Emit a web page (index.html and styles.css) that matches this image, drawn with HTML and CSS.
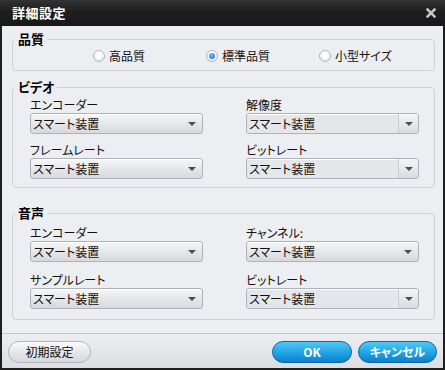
FILE: index.html
```html
<!DOCTYPE html>
<html lang="ja">
<head>
  <meta charset="UTF-8">
  <title>詳細設定</title>
  <link rel="stylesheet" href="styles.css">
</head>
<body>
  <div class="dialog">
    <div class="titlebar">
      <span class="title">詳細設定</span>
      <svg class="close-icon" viewBox="0 0 10 10">
        <line x1="1.5" y1="1.5" x2="8.5" y2="8.5"/>
        <line x1="8.5" y1="1.5" x2="1.5" y2="8.5"/>
      </svg>
    </div>

    <div class="content">
      <!-- Quality -->
      <fieldset class="group group-quality">
        <legend>品質</legend>
        <div class="radio-row">
          <label class="radio"><span class="radio-dot"></span>高品質</label>
          <label class="radio"><span class="radio-dot checked"></span>標準品質</label>
          <label class="radio"><span class="radio-dot"></span>小型サイズ</label>
        </div>
      </fieldset>

      <!-- Video -->
      <fieldset class="group group-video">
        <legend>ビデオ</legend>
        <div class="field-grid">
          <div class="field">
            <div class="field-label">エンコーダー</div>
            <div class="combo"><span>スマート装置</span><span class="combo-arrow"></span></div>
          </div>
          <div class="field">
            <div class="field-label">解像度</div>
            <div class="combo combo-split"><span>スマート装置</span><span class="combo-arrow"></span></div>
          </div>
          <div class="field">
            <div class="field-label">フレームレート</div>
            <div class="combo"><span>スマート装置</span><span class="combo-arrow"></span></div>
          </div>
          <div class="field">
            <div class="field-label">ビットレート</div>
            <div class="combo combo-split"><span>スマート装置</span><span class="combo-arrow"></span></div>
          </div>
        </div>
      </fieldset>

      <!-- Audio -->
      <fieldset class="group group-audio">
        <legend>音声</legend>
        <div class="field-grid">
          <div class="field">
            <div class="field-label">エンコーダー</div>
            <div class="combo"><span>スマート装置</span><span class="combo-arrow"></span></div>
          </div>
          <div class="field">
            <div class="field-label">チャンネル:</div>
            <div class="combo"><span>スマート装置</span><span class="combo-arrow"></span></div>
          </div>
          <div class="field">
            <div class="field-label">サンプルレート</div>
            <div class="combo"><span>スマート装置</span><span class="combo-arrow"></span></div>
          </div>
          <div class="field">
            <div class="field-label">ビットレート</div>
            <div class="combo combo-split"><span>スマート装置</span><span class="combo-arrow"></span></div>
          </div>
        </div>
      </fieldset>
    </div>

    <div class="footer">
      <button class="btn btn-default">初期設定</button>
      <div class="footer-actions">
        <button class="btn btn-primary btn-ok">OK</button>
        <button class="btn btn-primary">キャンセル</button>
      </div>
    </div>
  </div>
</body>
</html>
```

FILE: styles.css
```css
* {
  box-sizing: border-box;
}

body {
  margin: 0;
  font-family: "Noto Sans CJK JP", "Noto Sans", sans-serif;
  font-size: 12px;
  font-feature-settings: "palt" 1;
  color: #111;
  background: #1c1c1c;
}

.dialog {
  width: 445px;
  height: 370px;
  display: flex;
  flex-direction: column;
  background-color: #eceef1;
  border: 2px solid #1e1e1e;
  border-top: none;
}

/* Title bar */
.titlebar {
  height: 26px;
  margin: 0 -2px;
  padding: 0 8px 0 12px;
  display: flex;
  align-items: center;
  justify-content: space-between;
  background: linear-gradient(#333 0%, #202020 40%, #171717 100%);
}

.title {
  color: #fff;
  font-size: 13px;
  font-weight: 700;
  line-height: 14px;
  letter-spacing: 0.5px;
}

.close-icon {
  width: 10px;
  height: 10px;
  margin-right: 1px;
  stroke: #c4c4c4;
  stroke-width: 2.6;
  stroke-linecap: square;
}

/* Content */
.content {
  flex: 1;
  padding: 6px 8px 0 10px;
}

.group {
  margin: 0;
  padding: 0;
  min-width: 0;
  border: 1px solid #cfd2d7;
  border-radius: 4px;
}

.group legend {
  margin-left: 2px;
  padding: 0 3px;
  font-size: 13px;
  font-weight: 700;
  line-height: 14px;
  color: #000;
}

.group-video {
  margin-top: 9px;
}

.group-audio {
  margin-top: 18px;
}

/* Radios */
.radio-row {
  display: flex;
  height: 14px;
  margin: 3px 0 7px 80px;
}

.radio {
  width: 113px;
  display: flex;
  align-items: center;
  gap: 4px;
  font-size: 12px;
  line-height: 14px;
}

.radio:last-child {
  width: auto;
}

.radio-dot {
  width: 12px;
  height: 12px;
  border-radius: 50%;
  border: 1px solid #b3b7bd;
  background: radial-gradient(circle at 50% 35%, #ffffff 30%, #dcdee2 100%);
  display: flex;
  align-items: center;
  justify-content: center;
}

.radio-dot.checked::after {
  content: "";
  width: 6px;
  height: 6px;
  border-radius: 50%;
  background: radial-gradient(circle at 40% 35%, #6cc0ff 0%, #1a7fdc 80%);
}

/* Fields */
.field-grid {
  display: grid;
  grid-template-columns: 173px 173px;
  column-gap: 43px;
  row-gap: 8px;
  padding: 3px 16px 8px 17px;
}

.group-audio .field-grid {
  row-gap: 10px;
  padding-top: 5px;
  padding-bottom: 10px;
}

.field-label {
  line-height: 15px;
  margin-bottom: 1px;
  color: #111;
}

.combo {
  height: 21px;
  display: flex;
  align-items: center;
  justify-content: space-between;
  padding-left: 2px;
  border: 1px solid #aeb2b9;
  border-radius: 3px;
  background: linear-gradient(#f6f7f8, #e6e7ea 50%, #d7d9dd);
  box-shadow: inset 0 1px 0 #fff;
  line-height: 19px;
}

.combo-arrow {
  width: 20px;
  height: 19px;
  display: flex;
  align-items: center;
  justify-content: center;
}

.combo-arrow::after {
  content: "";
  border-left: 4px solid transparent;
  border-right: 4px solid transparent;
  border-top: 4px solid #4b4e53;
}

.combo-split {
  background: #e5e6e9;
}

.combo-split .combo-arrow {
  border-left: 1px solid #ccced3;
  background: linear-gradient(#f4f5f6, #d9dbdf);
  border-radius: 0 2px 2px 0;
}

/* Footer */
.footer {
  height: 35px;
  display: flex;
  align-items: flex-start;
  justify-content: space-between;
  padding: 7px 6px 0 6px;
  border-top: 1px solid #c3c6cb;
  background: linear-gradient(#eceef1, #dcdee2);
}

.footer-actions {
  display: flex;
  gap: 6px;
}

.btn {
  height: 22px;
  padding: 0;
  border-radius: 11px;
  font-family: inherit;
  font-size: 12px;
  font-feature-settings: "palt" 1;
  line-height: 20px;
  cursor: pointer;
}

.btn-default {
  width: 83px;
  color: #111;
  border: 1px solid #b3b6bc;
  background: linear-gradient(#fafafb, #e4e5e8 55%, #d6d8dc);
}

.btn-primary {
  width: 79px;
  color: #fff;
  font-weight: 700;
  border: 1px solid #0b67ad;
  background: linear-gradient(#52c8f5, #23a6e6 50%, #0d7fcc);
}

.btn-ok {
  width: 80px;
}
```
